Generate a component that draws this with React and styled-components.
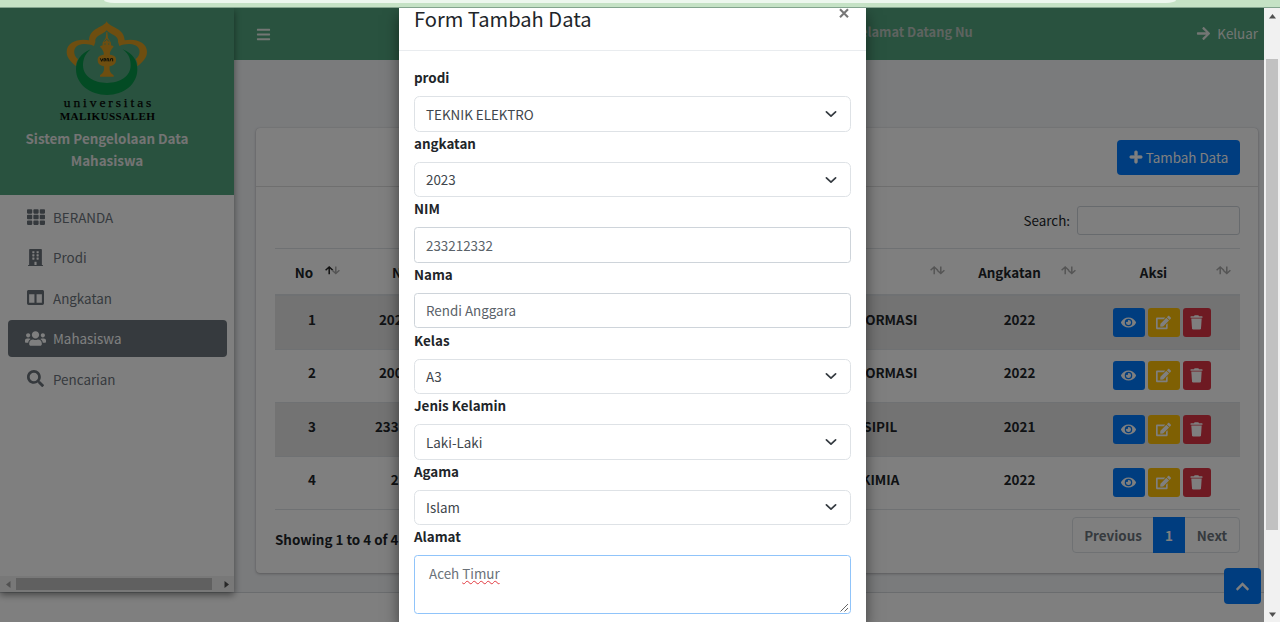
import React from 'react';
import styled, { createGlobalStyle, css } from 'styled-components';
import {
  FaBars, FaTh, FaBuilding, FaColumns, FaUsers, FaSearch, FaEye, FaEdit,
  FaPlus, FaArrowRight, FaChevronUp,
} from 'react-icons/fa';

const Global = createGlobalStyle`
  *, *::before, *::after { box-sizing: border-box; }
  body {
    margin: 0;
    overflow: hidden;
    font-family: "Noto Sans CJK SC", "Noto Sans", sans-serif;
    font-size: 13.4px;
    line-height: 22.4px;
    color: #212529;
  }
  svg { display: block; flex: none; }
`;

const Screen = styled.div`
  width: 1280px;
  height: 622px;
  display: flex;
  flex-direction: column;
  overflow: hidden;
`;

const BrowserStrip = styled.div`
  height: 8px;
  flex: none;
  padding-left: 104px;
  background: #c5e2c5;
  border-bottom: 1px solid #83a48e;
`;

const AddressBar = styled.div`
  width: 1072px;
  height: 3px;
  background: #edf7ee;
  border-radius: 0 0 10px 10px / 0 0 3px 3px;
`;

const Viewport = styled.div`
  flex: 1;
  min-height: 0;
  display: flex;
`;

const Page = styled.div`
  position: relative;
  width: 1264px;
  overflow: hidden;
  background: #fff;
  display: flex;
  flex-direction: column;
`;

const Shell = styled.div`
  display: flex;
  height: 584px;
  flex: none;
`;

const Sidebar = styled.aside`
  position: relative;
  z-index: 2;
  width: 234px;
  flex: none;
  display: flex;
  flex-direction: column;
  background: #fff;
  box-shadow: 0 3px 7px rgba(0, 0, 0, 0.45);
`;

const Brand = styled.div`
  height: 187px;
  padding: 6px 0 0 50px;
  background: #52a57e;
`;

const Logo = styled.div`
  width: 115px;
  height: 110px;
  display: flex;
  flex-direction: column;
  align-items: center;
  color: #050505;
`;

const LogoTop = styled.div`
  font: 400 13.5px/12px "Liberation Serif", serif;
  letter-spacing: 2.9px;
  margin: 0 0 0 3px;
  -webkit-text-stroke: 0.25px #050505;
`;

const LogoBottom = styled.div`
  font: 700 11.2px/11px "Liberation Serif", serif;
  letter-spacing: 0.35px;
  margin-top: 2px;
  white-space: nowrap;
`;

const BrandText = styled.div`
  width: 180px;
  margin: 3px 0 0 -33px;
  text-align: center;
  font-weight: 700;
  color: #e8e8e8;
`;

const Nav = styled.nav`
  flex: 1;
  padding: 3.4px 7px 0 8px;
  display: flex;
  flex-direction: column;
  gap: 3px;
`;

const NavItem = styled.a`
  height: 37.5px;
  display: flex;
  align-items: center;
  border-radius: 4px;
  color: ${(p) => (p.$active ? '#fff' : '#6d757c')};
  background: ${(p) => (p.$active ? '#6c757d' : 'transparent')};
  svg { color: ${(p) => (p.$active ? '#fff' : '#6a727a')}; }
`;

const NavIcon = styled.span`
  width: 37px;
  margin: -1px 0 0 9px;
  display: flex;
  justify-content: center;
  & + span { margin-left: -1px; }
`;

const HScroll = styled.div`
  height: 16px;
  display: flex;
  align-items: center;
  justify-content: space-between;
  padding: 0 4px 0 5px;
  background: #f1f1f1;
`;

const HThumb = styled.div`
  width: 196px;
  height: 12px;
  margin-right: 8px;
  background: #c1c1c1;
`;

const Main = styled.main`
  flex: 1;
  background: #f4f6f9;
`;

const Navbar = styled.header`
  height: 52px;
  padding: 0 6px 0 22px;
  display: flex;
  align-items: center;
  justify-content: space-between;
  background: #52a57e;
  color: #e6ece8;
`;

const Marquee = styled.div`
  width: 400px;
  margin: -4px 0 0 78px;
  text-align: right;
  font-size: 12.8px;
  font-weight: 700;
  color: #bcc7c0;
`;

const Logout = styled.a`
  display: flex;
  align-items: center;
  gap: 6px;
  margin-top: -1px;
`;

const Card = styled.section`
  width: 1002px;
  height: 445px;
  margin: 68px 0 0 22px;
  background: #fff;
  border-radius: 4px;
  box-shadow: 0 0 1px rgba(0, 0, 0, 0.2), 0 1px 3px rgba(0, 0, 0, 0.25);
`;

const CardHeader = styled.div`
  height: 59px;
  padding: 12px 18px 0 0;
  display: flex;
  justify-content: flex-end;
  align-items: flex-start;
  border-bottom: 1px solid #dfdfdf;
`;

const PrimaryButton = styled.button`
  width: 123px;
  height: 35px;
  padding: 0 0 1px;
  border: 0;
  border-radius: 4px;
  display: flex;
  align-items: center;
  justify-content: center;
  gap: 3px;
  font: inherit;
  background: #007bff;
  color: #fff;
  svg { stroke: #fff; stroke-width: 24px; }
`;

const CardBody = styled.div`
  padding: 19px 18px 0 19px;
`;

const SearchRow = styled.label`
  display: flex;
  justify-content: flex-end;
  align-items: flex-start;
  gap: 7px;
  height: 30px;
  & > span:first-child { padding-top: 3px; }
`;

const SearchBox = styled.span`
  width: 163px;
  height: 29px;
  border: 1px solid #ced4da;
  border-radius: 3px;
`;

const Table = styled.div`
  margin-top: 12px;
  border-top: 1px solid #dee2e6;
  font-weight: 700;
`;

const columns = css`
  display: grid;
  grid-template-columns: 74px 123px 282px 200px 131px 155px;
  text-align: center;
`;

const HeadRow = styled.div`
  ${columns}
  height: 47px;
  border-bottom: 2px solid #dee2e6;
`;

const HeadCell = styled.div`
  display: flex;
  align-items: center;
  padding: 1px 9px 0 0;
  & > span { flex: 1; padding-left: ${(p) => p.$inset || 0}px; }
  svg { margin-top: -3px; }
`;

const Row = styled.div`
  ${columns}
  height: ${(p) => (p.$odd ? 54 : 53)}px;
  padding-top: ${(p) => (p.$odd ? 12 : 11.4)}px;
  border-bottom: 1px solid #dee2e6;
  background: ${(p) => (p.$odd ? '#e6e6e6' : '#fff')};
  white-space: nowrap;
`;

const Actions = styled.div`
  display: flex;
  justify-content: center;
  gap: 3px;
  margin-right: 2px;
`;

const actionColors = { view: '#007bff', edit: '#ffc107', remove: '#dc3545' };

const ActionButton = styled.button`
  width: ${(p) => (p.$kind === 'remove' ? 28 : 32)}px;
  height: 29px;
  padding: 0 0 1px;
  border: 0;
  border-radius: 3px;
  display: grid;
  place-items: center;
  color: #fff;
  background: ${(p) => actionColors[p.$kind]};
`;

const TableFooter = styled.div`
  display: flex;
  justify-content: space-between;
  align-items: flex-start;
  padding-top: 7px;
  font-weight: 700;
`;

const Info = styled.div`
  margin-top: 11px;
`;

const Pagination = styled.div`
  display: flex;
  height: 36px;
  border: 1px solid #dee2e6;
  border-radius: 4px;
`;

const PageLink = styled.span`
  width: ${(p) => p.$w}px;
  display: grid;
  place-items: center;
  color: ${(p) => (p.$active ? '#fff' : '#6c757d')};
  background: ${(p) => (p.$active ? '#007bff' : 'transparent')};
  margin: ${(p) => (p.$active ? '-1px 0' : '0')};
`;

const Footer = styled.footer`
  flex: 1;
  border-top: 1px solid #d5d9dd;
  background: #fff;
`;

const ToTop = styled.button`
  position: absolute;
  z-index: 3;
  right: 3px;
  bottom: 18px;
  width: 37px;
  height: 36px;
  padding: 0;
  border: 0;
  border-radius: 4px;
  display: grid;
  place-items: center;
  background: #007bff;
  color: #fff;
`;

const Backdrop = styled.div`
  position: absolute;
  z-index: 4;
  inset: 0;
  display: flex;
  justify-content: center;
  background: rgba(0, 0, 0, 0.5);
`;

const Dialog = styled.div`
  width: 467px;
  margin-left: 1px;
  background: #fff;
  box-shadow: 0 7px 14px rgba(0, 0, 0, 0.5);
`;

const DialogHeader = styled.div`
  height: 43px;
  padding: 0 17px 0 15px;
  display: flex;
  justify-content: space-between;
  border-bottom: 1px solid #e9ecef;
`;

const DialogTitle = styled.h4`
  margin: 0;
  font-size: 20.1px;
  line-height: 21px;
  font-weight: 400;
`;

const DialogBody = styled.div`
  padding: 15.2px 15px 0;
`;

const Field = styled.div`
  height: 65.58px;
`;

const Label = styled.div`
  height: 30px;
  font-weight: 700;
`;

const Control = styled.div`
  height: 35.5px;
  padding: 0 13px 0 11px;
  display: flex;
  align-items: center;
  justify-content: space-between;
  border: 1px solid ${(p) => (p.$select ? '#dee2e6' : '#ced4da')};
  border-radius: ${(p) => (p.$select ? 5.5 : 3.5)}px;
  color: ${(p) => (p.$select ? '#40464c' : '#5a6269')};
`;

const TextArea = styled.div`
  height: 59px;
  display: flex;
  align-items: flex-end;
  justify-content: space-between;
  padding: 0 1px 1px 14px;
  border: 1px solid #90c4fa;
  border-radius: 3.5px;
  color: #6a7178;
  & > p { margin: 0; align-self: flex-start; padding-top: 6px; }
`;

const Misspelled = styled.span`
  text-decoration: underline wavy #e2383f 1px;
  text-underline-offset: 1px;
  text-decoration-skip-ink: none;
`;

const VScroll = styled.div`
  width: 16px;
  display: flex;
  flex-direction: column;
  align-items: center;
  justify-content: space-between;
  padding: 5px 0 4px;
  background: #f1f1f1;
`;

const VThumb = styled.div`
  width: 12px;
  height: 471px;
  margin-top: -42px;
  background: #c1c1c1;
`;

const Triangle = ({ dir, color = '#505050' }) => {
  const paths = {
    up: 'M0 5.5 3.5 1 7 5.5Z',
    down: 'M0 1.5 3.5 6 7 1.5Z',
    left: 'M5.5 0 1 3.5 5.5 7Z',
    right: 'M1.5 0 6 3.5 1.5 7Z',
  };
  return <svg width="7" height="7" viewBox="0 0 7 7"><path d={paths[dir]} fill={color} /></svg>;
};

const SortIcon = ({ asc }) => (
  <svg width="15" height="9" viewBox="0 0 15 9" fill="none" strokeWidth="1.5">
    <path d="M4.2 8.2V1.2M0.6 4.3 4.2 1 7.8 4.3" stroke={asc ? '#222' : '#aaa'} />
    <path d="M10.8 0.4V7.4M7.2 4.3 10.8 7.6 14.4 4.3" stroke="#aaa" />
  </svg>
);

const Chevron = () => (
  <svg width="12" height="8" viewBox="0 0 12 8" fill="none">
    <path d="M1.4 1.8 6 6.2 10.6 1.8" stroke="#343a40" strokeWidth="1.7" strokeLinecap="round" strokeLinejoin="round" />
  </svg>
);

const CloseIcon = () => (
  <svg width="10" height="11" viewBox="0 0 10 11">
    <path d="M1 1.3 9 9.3M9 1.3 1 9.3" stroke="#777" strokeWidth="2.1" />
  </svg>
);

const TrashIcon = () => (
  <svg width="13" height="15" viewBox="0 0 13 15" fill="currentColor">
    <path d="M1 1.2H4L4.6 0.3H8.4L9 1.2H12Q12.5 1.2 12.5 1.7V2.8H0.5V1.7Q0.5 1.2 1 1.2Z" />
    <path d="M1.3 3.5H11.7L11 13.2Q10.9 14.5 9.7 14.5H3.3Q2.1 14.5 2 13.2Z" />
  </svg>
);

const Grip = () => (
  <svg width="9" height="9" viewBox="0 0 9 9">
    <path d="M0.5 8.5 8 1M4.5 8.5 8 5" stroke="#666" strokeWidth="1" />
  </svg>
);

const Emblem = () => (
  <svg width="115" height="83" viewBox="0 0 345 249">
    <g fill="#dc9c20">
      <path d="M170 22C179 42 222 40 224 79C254 72 291 84 291 113C291 131 279 143 262 157C263 148 261 142 257 135C273 125 276 96 246 91C231 89 221 91 208 96L204 84C207 65 181 62 170 49C159 62 133 65 136 84L132 96C119 91 109 89 94 91C66 96 69 125 84 135C80 142 78 148 79 157C62 143 50 131 50 113C50 84 87 72 117 79C119 40 161 42 170 22Z" />
      <path d="M169 54H172L174 72C180 82 185 85 183 94C190 96 194 99 188 101C182 110 178 114 180 122C194 124 198 128 198 138C198 149 190 155 179 157C178 170 180 177 191 184V188H150V184C161 177 163 170 162 157C150 155 143 149 143 138C143 128 148 124 161 122C163 114 159 110 153 101C147 99 151 96 158 94C156 85 161 82 167 72Z" />
    </g>
    <path d="M122 106C91 119 78 141 78 166C78 211 120 243 171 243C222 243 262 211 262 166C262 141 250 118 218 106C239 121 242 140 242 154C242 187 210 207 171 207C132 207 99 187 99 154C99 140 103 121 122 106Z" fill="#079648" />
    <path d="M163 83L170 76L178 83M163 90H167M174 90H178" stroke="#52a57e" strokeWidth="3" fill="none" />
    <path d="M151 133L155 142L159 133M162 142V134H167L165 142M171 142V134H176V142M180 142L182 134H188V142" stroke="#1c2010" strokeWidth="3" fill="none" />
  </svg>
);

const navItems = [
  { label: 'BERANDA', Icon: FaTh, size: 18 },
  { label: 'Prodi', Icon: FaBuilding, size: 17 },
  { label: 'Angkatan', Icon: FaColumns, size: 17 },
  { label: 'Mahasiswa', Icon: FaUsers, size: 21, active: true },
  { label: 'Pencarian', Icon: FaSearch, size: 17 },
];

const students = [
  { nim: '20220101', prodi: 'TEKNIK INFORMASI', year: '2022' },
  { nim: '20017010', prodi: 'TEKNIK INFORMASI', year: '2022' },
  { nim: '233212332', prodi: 'TEKNIK SIPIL', year: '2021' },
  { nim: '21202', prodi: 'TEKNIK KIMIA', year: '2022' },
];

const fields = [
  { label: 'prodi', value: 'TEKNIK ELEKTRO', select: true },
  { label: 'angkatan', value: '2023', select: true },
  { label: 'NIM', value: '233212332' },
  { label: 'Nama', value: 'Rendi Anggara' },
  { label: 'Kelas', value: 'A3', select: true },
  { label: 'Jenis Kelamin', value: 'Laki-Laki', select: true },
  { label: 'Agama', value: 'Islam', select: true },
];

export default function App() {
  return (
    <Screen>
      <Global />
      <BrowserStrip><AddressBar /></BrowserStrip>
      <Viewport>
        <Page>
          <Shell>
            <Sidebar>
              <Brand>
                <Logo>
                  <Emblem />
                  <LogoTop>universitas</LogoTop>
                  <LogoBottom>MALIKUSSALEH</LogoBottom>
                </Logo>
                <BrandText>Sistem Pengelolaan Data Mahasiswa</BrandText>
              </Brand>
              <Nav>
                {navItems.map(({ label, Icon, size, active }) => (
                  <NavItem key={label} $active={active}>
                    <NavIcon><Icon size={size} /></NavIcon>
                    <span>{label}</span>
                  </NavItem>
                ))}
              </Nav>
              <HScroll>
                <Triangle dir="left" color="#a3a3a3" />
                <HThumb />
                <Triangle dir="right" />
              </HScroll>
            </Sidebar>
            <Main>
              <Navbar>
                <FaBars size={15} />
                <Marquee>Selamat Datang Nu</Marquee>
                <Logout><FaArrowRight size={15} /><span>Keluar</span></Logout>
              </Navbar>
              <Card>
                <CardHeader>
                  <PrimaryButton><FaPlus size={14} /><span>Tambah Data</span></PrimaryButton>
                </CardHeader>
                <CardBody>
                  <SearchRow><span>Search:</span><SearchBox /></SearchRow>
                  <Table>
                    <HeadRow>
                      <HeadCell $inset={8}><span>No</span><SortIcon asc /></HeadCell>
                      <HeadCell $inset={13}><span>NIM</span><SortIcon /></HeadCell>
                      <div />
                      <HeadCell><span>Prodi</span><SortIcon /></HeadCell>
                      <HeadCell $inset={4}><span>Angkatan</span><SortIcon /></HeadCell>
                      <HeadCell $inset={6}><span>Aksi</span><SortIcon /></HeadCell>
                    </HeadRow>
                    {students.map((s, i) => (
                      <Row key={s.nim} $odd={i % 2 === 0}>
                        <span>{i + 1}</span>
                        <span>{s.nim}</span>
                        <span />
                        <span>{s.prodi}</span>
                        <span>{s.year}</span>
                        <Actions>
                          <ActionButton $kind="view"><FaEye size={15} /></ActionButton>
                          <ActionButton $kind="edit"><FaEdit size={15} /></ActionButton>
                          <ActionButton $kind="remove"><TrashIcon /></ActionButton>
                        </Actions>
                      </Row>
                    ))}
                  </Table>
                  <TableFooter>
                    <Info>Showing 1 to 4 of 4 entries</Info>
                    <Pagination>
                      <PageLink $w={80}>Previous</PageLink>
                      <PageLink $w={32} $active>1</PageLink>
                      <PageLink $w={54}>Next</PageLink>
                    </Pagination>
                  </TableFooter>
                </CardBody>
              </Card>
            </Main>
          </Shell>
          <Footer />
          <ToTop><FaChevronUp size={15} /></ToTop>
          <Backdrop>
            <Dialog>
              <DialogHeader>
                <DialogTitle>Form Tambah Data</DialogTitle>
                <CloseIcon />
              </DialogHeader>
              <DialogBody>
                {fields.map((f) => (
                  <Field key={f.label}>
                    <Label>{f.label}</Label>
                    <Control $select={f.select}>
                      <span>{f.value}</span>
                      {f.select && <Chevron />}
                    </Control>
                  </Field>
                ))}
                <Label>Alamat</Label>
                <TextArea>
                  <p>Aceh <Misspelled>Timur</Misspelled></p>
                  <Grip />
                </TextArea>
              </DialogBody>
            </Dialog>
          </Backdrop>
        </Page>
        <VScroll>
          <Triangle dir="up" />
          <VThumb />
          <Triangle dir="down" />
        </VScroll>
      </Viewport>
    </Screen>
  );
}
